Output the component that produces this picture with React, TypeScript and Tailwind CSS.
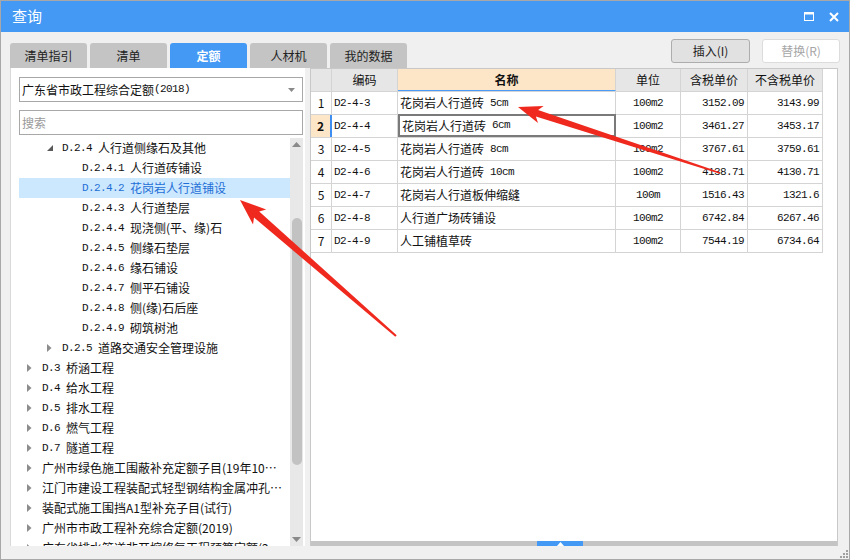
import React from "react";

const cjk = { fontFamily: '"Noto Sans CJK SC", "Noto Sans", sans-serif' };
const mono = { fontFamily: '"Liberation Mono", "Noto Sans CJK SC", monospace' };

type Node = { lv: number; code: string; text: string; open?: boolean; leaf?: boolean; sel?: boolean };

const tree: Node[] = [
  { lv: 1, code: "D.2.4", text: "人行道侧缘石及其他", open: true },
  { lv: 2, code: "D.2.4.1", text: "人行道砖铺设", leaf: true },
  { lv: 2, code: "D.2.4.2", text: "花岗岩人行道铺设", leaf: true, sel: true },
  { lv: 2, code: "D.2.4.3", text: "人行道垫层", leaf: true },
  { lv: 2, code: "D.2.4.4", text: "现浇侧(平、缘)石", leaf: true },
  { lv: 2, code: "D.2.4.5", text: "侧缘石垫层", leaf: true },
  { lv: 2, code: "D.2.4.6", text: "缘石铺设", leaf: true },
  { lv: 2, code: "D.2.4.7", text: "侧平石铺设", leaf: true },
  { lv: 2, code: "D.2.4.8", text: "侧(缘)石后座", leaf: true },
  { lv: 2, code: "D.2.4.9", text: "砌筑树池", leaf: true },
  { lv: 1, code: "D.2.5", text: "道路交通安全管理设施" },
  { lv: 0, code: "D.3", text: "桥涵工程" },
  { lv: 0, code: "D.4", text: "给水工程" },
  { lv: 0, code: "D.5", text: "排水工程" },
  { lv: 0, code: "D.6", text: "燃气工程" },
  { lv: 0, code: "D.7", text: "隧道工程" },
  { lv: 0, code: "", text: "广州市绿色施工围蔽补充定额子目(19年10…" },
  { lv: 0, code: "", text: "江门市建设工程装配式轻型钢结构金属冲孔…" },
  { lv: 0, code: "", text: "装配式施工围挡A1型补充子目(试行)" },
  { lv: 0, code: "", text: "广州市市政工程补充综合定额(2019)" },
  { lv: 0, code: "", text: "广东省排水管道非开挖修复工程预算定额(2…" },
];

const rows = [
  ["D2-4-3", "花岗岩人行道砖 5cm", "100m2", "3152.09", "3143.99"],
  ["D2-4-4", "花岗岩人行道砖 6cm", "100m2", "3461.27", "3453.17"],
  ["D2-4-5", "花岗岩人行道砖 8cm", "100m2", "3767.61", "3759.61"],
  ["D2-4-6", "花岗岩人行道砖 10cm", "100m2", "4138.71", "4130.71"],
  ["D2-4-7", "花岗岩人行道板伸缩缝", "100m", "1516.43", "1321.6"],
  ["D2-4-8", "人行道广场砖铺设", "100m2", "6742.84", "6267.46"],
  ["D2-4-9", "人工铺植草砖", "100m2", "7544.19", "6734.64"],
];

function Tabs() {
  const tabs = ["清单指引", "清单", "定额", "人材机", "我的数据"];
  return (
    <div className="flex gap-[3px] mt-[11px]">
      {tabs.map((t) => (
        <div
          key={t}
          className={`w-[77px] h-[25px] flex items-center justify-center rounded-t-[3px] text-[12px] ${
            t === "定额" ? "bg-[#4499f5] text-white font-bold" : "bg-[#c4c4c4] text-[#222]"
          }`}
        >
          {t}
        </div>
      ))}
    </div>
  );
}

function TreeRow({ n }: { n: Node }) {
  return (
    <div
      className={`h-[20px] flex items-center whitespace-pre ${n.sel ? "bg-[#cce8ff] text-[#1f6fd6]" : "text-[#111]"}`}
      style={{ paddingLeft: 8 + n.lv * 20 }}
    >
      <div className="w-[15px] h-[20px] flex items-center shrink-0">
        {!n.leaf &&
          (n.open ? (
            <svg width="6" height="6" viewBox="0 0 6 6">
              <path d="M6 0 L6 6 L0 6 Z" fill="#5a5a5a" />
            </svg>
          ) : (
            <svg width="5" height="8" viewBox="0 0 5 8">
              <path d="M0 0 L4.5 4 L0 8 Z" fill="#8c8c8c" />
            </svg>
          ))}
      </div>
      {n.code && (
        <span className="text-[11px] tracking-[-0.6px]" style={mono}>
          {n.code + " "}
        </span>
      )}
      <span className="text-[12px]">{n.text}</span>
    </div>
  );
}

function LeftPanel() {
  return (
    <div className="w-[295px] bg-white border-l border-[#d9d9d9] flex flex-col pl-[8px] pr-[2px] pt-[9px]">
      <div className="h-[25px] border border-[#a8a8a8] flex items-center pl-[2px] pr-[7px] text-[12px] text-[#111]">
        <span>广东省市政工程综合定额</span>
        <span className="text-[11px] tracking-[-0.6px]" style={mono}>(2018)</span>
        <svg className="ml-auto" width="7" height="4" viewBox="0 0 7 4">
          <path d="M0 0 L7 0 L3.5 4 Z" fill="#8a8a8a" />
        </svg>
      </div>
      <div className="h-[25px] mt-[8px] border border-[#a8a8a8] flex items-center pl-[2px] text-[12px] text-[#9a9a9a]">
        搜索
      </div>
      <div className="flex-1 mt-[3px] flex overflow-hidden">
        <div className="flex-1 overflow-hidden">
          {tree.map((n, i) => (
            <TreeRow key={i} n={n} />
          ))}
        </div>
        <div className="w-[13px] bg-[#e8e8e8] flex flex-col items-center">
          <svg className="mt-[4px]" width="9" height="5" viewBox="0 0 9 5">
            <path d="M4.5 0 L9 5 L0 5 Z" fill="#8a8a8a" />
          </svg>
          <div className="w-[10px] h-[247px] mt-[71px] rounded-[5px] bg-[#c2c2c2]" />
          <svg className="mt-auto mb-[4px]" width="9" height="5" viewBox="0 0 9 5">
            <path d="M0 0 L9 0 L4.5 5 Z" fill="#8a8a8a" />
          </svg>
        </div>
      </div>
    </div>
  );
}

const widths = ["w-[21px]", "w-[66px]", "w-[218px]", "w-[65px]", "w-[67px]", "w-[75px]"];

// CJK part in the UI font, trailing size like "5cm" in the narrow mono font
function Name({ s }: { s: string }) {
  const [a, b] = s.split(" ");
  return (
    <>
      <span className="text-[12px]" style={cjk}>{a}</span>
      {b && (
        <span className="text-[11px] tracking-[-0.6px]" style={mono}>
          {" " + b}
        </span>
      )}
    </>
  );
}

function Table() {
  const head = ["", "编码", "名称", "单位", "含税单价", "不含税单价"];
  return (
    <div className="w-[512px] text-[#111]">
      <div className="flex h-[23px] border-b border-[#d4d4d4]">
        {head.map((h, i) => (
          <div
            key={i}
            className={`${widths[i]} border-r border-[#d4d4d4] flex items-center justify-center text-[12px] ${
              i === 2 ? "bg-[#fde6c8] font-bold border-b border-b-[#4a9cf7]" : "bg-[#e6e6e6]"
            }`}
          >
            {h}
          </div>
        ))}
      </div>
      {rows.map((r, ri) => {
        const sel = ri === 1;
        return (
          <div key={ri} className="flex h-[23px] border-b border-[#d4d4d4]">
            <div
              className={`${widths[0]} border-r flex items-center justify-center text-[12px] ${
                sel ? "bg-[#fde6c8] font-bold border-r-2 border-[#3d8ef0]" : "border-[#d4d4d4]"
              }`}
            >
              {ri + 1}
            </div>
            <div className={`${widths[1]} border-r border-[#d4d4d4] flex items-center pl-[2px] text-[11px] tracking-[-0.6px]`} style={mono}>
              {r[0]}
            </div>
            <div
              className={`${widths[2]} flex items-center pl-[2px] whitespace-pre ${
                sel ? "border-2 border-[#7a7a7a] -mt-px h-[23px]" : "border-r border-[#d4d4d4]"
              }`}
            >
              <Name s={r[1]} />
            </div>
            <div className={`${widths[3]} border-r border-[#d4d4d4] flex items-center justify-center text-[11px] tracking-[-0.6px]`} style={mono}>
              {r[2]}
            </div>
            <div className={`${widths[4]} border-r border-[#d4d4d4] flex items-center justify-end pr-[3px] text-[11px] tracking-[-0.6px]`} style={mono}>
              {r[3]}
            </div>
            <div className={`${widths[5]} border-r border-[#d4d4d4] flex items-center justify-end pr-[3px] text-[11px] tracking-[-0.6px]`} style={mono}>
              {r[4]}
            </div>
          </div>
        );
      })}
    </div>
  );
}

function RightPanel() {
  return (
    <div className="w-[528px] bg-white border-l border-t border-r border-[#c8c8c8] flex flex-col">
      <div className="flex-1">
        <Table />
      </div>
      <div className="h-[5px] bg-[#c4c4c4] flex">
        <div className="ml-[226px] w-[46px] h-[5px] bg-[#4499f5] flex items-center justify-center">
          <svg width="7" height="4" viewBox="0 0 7 4">
            <path d="M3.5 0 L7 4 L0 4 Z" fill="#fff" />
          </svg>
        </div>
      </div>
    </div>
  );
}

export default function App() {
  return (
    <div className="relative w-[850px] h-[560px] overflow-hidden" style={cjk}>
      <div className="w-full h-full border border-[#a8a8a8] bg-[#f0f0f0] flex flex-col">
        <div className="h-[31px] bg-[#4499f5] flex items-center pl-[11px] pr-[10px] text-white">
          <span className="text-[15px]">查询</span>
          <div className="ml-auto flex items-center gap-[15px]">
            <svg width="10" height="9" viewBox="0 0 10 9">
              <rect x="0.5" y="1" width="9" height="7.5" fill="none" stroke="#fff" strokeWidth="1" />
              <rect x="0" y="0" width="10" height="2.5" fill="#fff" />
            </svg>
            <svg width="10" height="10" viewBox="0 0 10 10">
              <path d="M1 1 L9 9 M9 1 L1 9" stroke="#fff" strokeWidth="2" />
            </svg>
          </div>
        </div>
        <div className="h-[36px] flex items-start pl-[9px] pr-[9px]">
          <Tabs />
          <div className="ml-auto flex gap-[12px] mt-[7px]">
            <div className="w-[79px] h-[24px] bg-[#e1e1e1] border border-[#adadad] rounded-[3px] flex items-center justify-center text-[12px] text-[#222]">
              插入(I)
            </div>
            <div className="w-[78px] h-[24px] bg-white border border-[#dcdcdc] rounded-[3px] flex items-center justify-center text-[12px] text-[#a6a6a6]">
              替换(R)
            </div>
          </div>
        </div>
        <div className="h-[478px] flex pl-[9px]">
          <LeftPanel />
          <div className="w-[5px]" />
          <RightPanel />
        </div>
        <div className="flex-1 flex justify-end items-end pr-[1px] pb-[1px]">
          <svg width="8" height="8" viewBox="0 0 8 8">
            <rect x="6" y="0" width="2" height="2" fill="#a0a0a0" />
            <rect x="3" y="3" width="2" height="2" fill="#a0a0a0" />
            <rect x="6" y="3" width="2" height="2" fill="#a0a0a0" />
            <rect x="0" y="6" width="2" height="2" fill="#a0a0a0" />
            <rect x="3" y="6" width="2" height="2" fill="#a0a0a0" />
            <rect x="6" y="6" width="2" height="2" fill="#a0a0a0" />
          </svg>
        </div>
      </div>
      {/* red annotation arrows over the screenshot */}
      <svg className="absolute left-0 top-0 pointer-events-none" width="850" height="560" viewBox="0 0 850 560">
        <polygon
          points="518,107 543.6,105.9 538.1,109.9 720.3,172.2 719.7,173.8 535.9,116.5 538,123"
          fill="#f0291e"
        />
        <polygon
          points="240,200 266.2,209.5 259.2,211.4 396.7,335.3 395.3,336.8 254,217.5 253,224.6"
          fill="#f0291e"
        />
      </svg>
    </div>
  );
}
